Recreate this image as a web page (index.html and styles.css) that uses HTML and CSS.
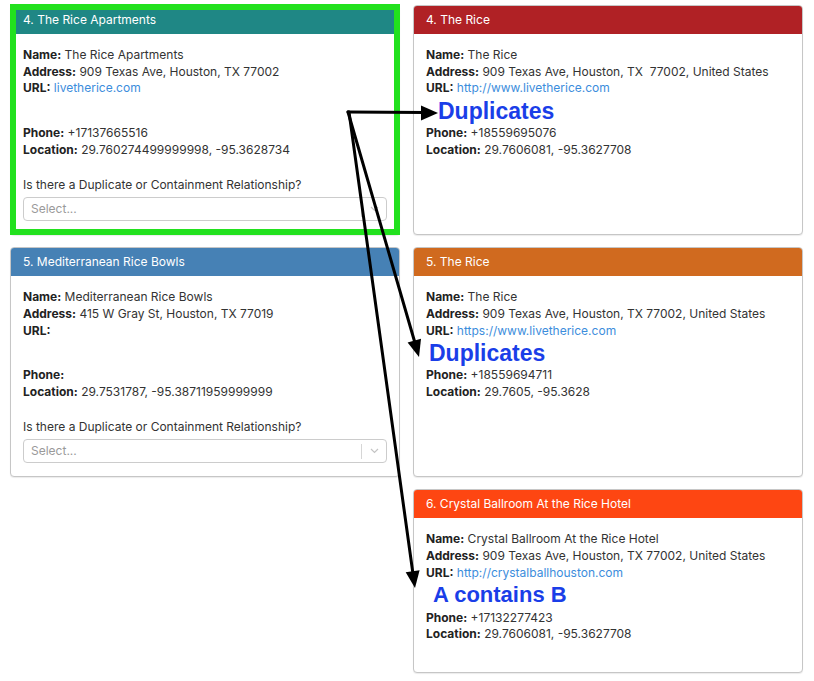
FILE: index.html
```html
<!DOCTYPE html>
<html lang="en">
<head>
<meta charset="utf-8">
<title>Duplicate review</title>
<link rel="stylesheet" href="styles.css">
</head>
<body>
<div class="board">
  <div class="card card-selected">
    <div class="card-head head-teal">4. The Rice Apartments</div>
    <div class="card-body">
      <div class="row"><b>Name:</b> The Rice Apartments</div>
      <div class="row"><b>Address:</b> 909 Texas Ave, Houston, TX 77002</div>
      <div class="row"><b>URL:</b> <a class="link" href="#">livetherice.com</a></div>
      <div class="spacer"></div>
      <div class="row"><b>Phone:</b> +17137665516</div>
      <div class="row"><b>Location:</b> 29.760274499999998, -95.3628734</div>
      <div class="question">Is there a Duplicate or Containment Relationship?</div>
      <div class="select">
        <span class="placeholder">Select...</span>
        <span class="sep"></span>
        <svg class="chev" width="9" height="6" viewBox="0 0 9 6"><path d="M1 1l3.5 3.5L8 1" fill="none" stroke="#c4c4c4" stroke-width="1.2"/></svg>
      </div>
    </div>
    <div class="highlight"></div>
  </div>

  <div class="card">
    <div class="card-head head-red">4. The Rice</div>
    <div class="card-body tall">
      <div class="row"><b>Name:</b> The Rice</div>
      <div class="row"><b>Address:</b> 909 Texas Ave, Houston, TX&nbsp; 77002, United States</div>
      <div class="row"><b>URL:</b> <a class="link" href="#">http://www.livetherice.com</a></div>
      <div class="spacer"><span class="tag tag-a">Duplicates</span></div>
      <div class="row"><b>Phone:</b> +18559695076</div>
      <div class="row"><b>Location:</b> 29.7606081, -95.3627708</div>
    </div>
  </div>

  <div class="card">
    <div class="card-head head-blue">5. Mediterranean Rice Bowls</div>
    <div class="card-body">
      <div class="row"><b>Name:</b> Mediterranean Rice Bowls</div>
      <div class="row"><b>Address:</b> 415 W Gray St, Houston, TX 77019</div>
      <div class="row"><b>URL:</b></div>
      <div class="spacer"></div>
      <div class="row"><b>Phone:</b></div>
      <div class="row"><b>Location:</b> 29.7531787, -95.38711959999999</div>
      <div class="question">Is there a Duplicate or Containment Relationship?</div>
      <div class="select">
        <span class="placeholder">Select...</span>
        <span class="sep"></span>
        <svg class="chev" width="9" height="6" viewBox="0 0 9 6"><path d="M1 1l3.5 3.5L8 1" fill="none" stroke="#c4c4c4" stroke-width="1.2"/></svg>
      </div>
    </div>
  </div>

  <div class="card">
    <div class="card-head head-orange">5. The Rice</div>
    <div class="card-body tall">
      <div class="row"><b>Name:</b> The Rice</div>
      <div class="row"><b>Address:</b> 909 Texas Ave, Houston, TX 77002, United States</div>
      <div class="row"><b>URL:</b> <a class="link" href="#">https://www.livetherice.com</a></div>
      <div class="spacer"><span class="tag tag-b">Duplicates</span></div>
      <div class="row"><b>Phone:</b> +18559694711</div>
      <div class="row"><b>Location:</b> 29.7605, -95.3628</div>
    </div>
  </div>

  <div class="card col-right">
    <div class="card-head head-orangered">6. Crystal Ballroom At the Rice Hotel</div>
    <div class="card-body tall">
      <div class="row"><b>Name:</b> Crystal Ballroom At the Rice Hotel</div>
      <div class="row"><b>Address:</b> 909 Texas Ave, Houston, TX 77002, United States</div>
      <div class="row"><b>URL:</b> <a class="link" href="#">http://crystalballhouston.com</a></div>
      <div class="spacer"><span class="tag tag-c">A contains B</span></div>
      <div class="row"><b>Phone:</b> +17132277423</div>
      <div class="row"><b>Location:</b> 29.7606081, -95.3627708</div>
    </div>
  </div>

  <svg class="arrows" width="814" height="681" viewBox="0 0 814 681">
    <g stroke="#000" stroke-width="3" fill="none" stroke-linecap="round">
      <line x1="348" y1="112" x2="425" y2="112.5"/>
      <line x1="348" y1="112" x2="415" y2="343"/>
      <line x1="349" y1="112" x2="413" y2="574"/>
    </g>
    <g fill="#000">
      <polygon points="438,113 421,105.5 421,120.5"/>
      <polygon points="419,357 407.6,342.6 421,338.7"/>
      <polygon points="415,588 405.7,572.2 419.6,570.2"/>
    </g>
  </svg>
</div>
</body>
</html>
```

FILE: styles.css
```css
* { box-sizing: border-box; }

html, body {
  margin: 0;
  padding: 0;
  background: #ffffff;
}

body {
  width: 814px;
  height: 681px;
  overflow: hidden;
  font-family: Inter, "Liberation Sans", Arial, sans-serif;
  font-size: 12px;
  color: #333333;
}

.board {
  position: relative;
  display: grid;
  grid-template-columns: 390px 390px;
  column-gap: 13px;
  row-gap: 12px;
  align-content: start;
  padding: 5px 11px 0 10px;
  height: 681px;
}

.col-right { grid-column: 2; }

.card {
  position: relative;
  display: flex;
  flex-direction: column;
  background: #ffffff;
  border: 1px solid #c6c6c6;
  border-radius: 4px;
  box-shadow: 0 1px 1px rgba(0, 0, 0, 0.08);
}

.card-head {
  height: 28px;
  line-height: 28px;
  padding: 0 12px;
  color: #ffffff;
  font-size: 12px;
  border-radius: 3px 3px 0 0;
  white-space: nowrap;
}

.head-teal { background: #1f8785; }
.head-red { background: #b02125; }
.head-blue { background: #4681b5; }
.head-orange { background: #d06a1f; }
.head-orangered { background: #fe4612; }

.card-body {
  padding: 13px 12px 13px;
  line-height: 16.7px;
}

.card-body.tall { padding-bottom: 29px; }

.row { white-space: nowrap; }

.row b {
  font-weight: 700;
  color: #222222;
}

.link {
  color: #3c8ddc;
  text-decoration: none;
}

.spacer {
  height: 28px;
}

.tag {
  display: block;
  font-family: "Liberation Sans", Arial, sans-serif;
  font-weight: 700;
  color: #1a3ee8;
  white-space: nowrap;
}

.tag-a { font-size: 23px; line-height: 26px; padding: 1px 0 0 12px; }
.tag-b { font-size: 23px; line-height: 26px; padding: 1px 0 0 3px; }
.tag-c { font-size: 22px; line-height: 26px; padding: 0 0 0 7px; }

.question {
  margin-top: 18px;
  color: #333333;
}

.select {
  display: flex;
  align-items: center;
  height: 24px;
  margin-top: 4px;
  border: 1px solid #cccccc;
  border-radius: 4px;
  padding-left: 7px;
}

.placeholder {
  flex: 1;
  color: #9a9a9a;
}

.sep {
  width: 1px;
  height: 15px;
  background: #d6d6d6;
}

.chev {
  margin: 0 7px 0 8px;
}

.highlight {
  position: absolute;
  top: -2px;
  left: -1px;
  right: -1px;
  bottom: -1px;
  border: 6px solid #22e11e;
  pointer-events: none;
}

.arrows {
  position: absolute;
  left: 0;
  top: 0;
  pointer-events: none;
}
```
